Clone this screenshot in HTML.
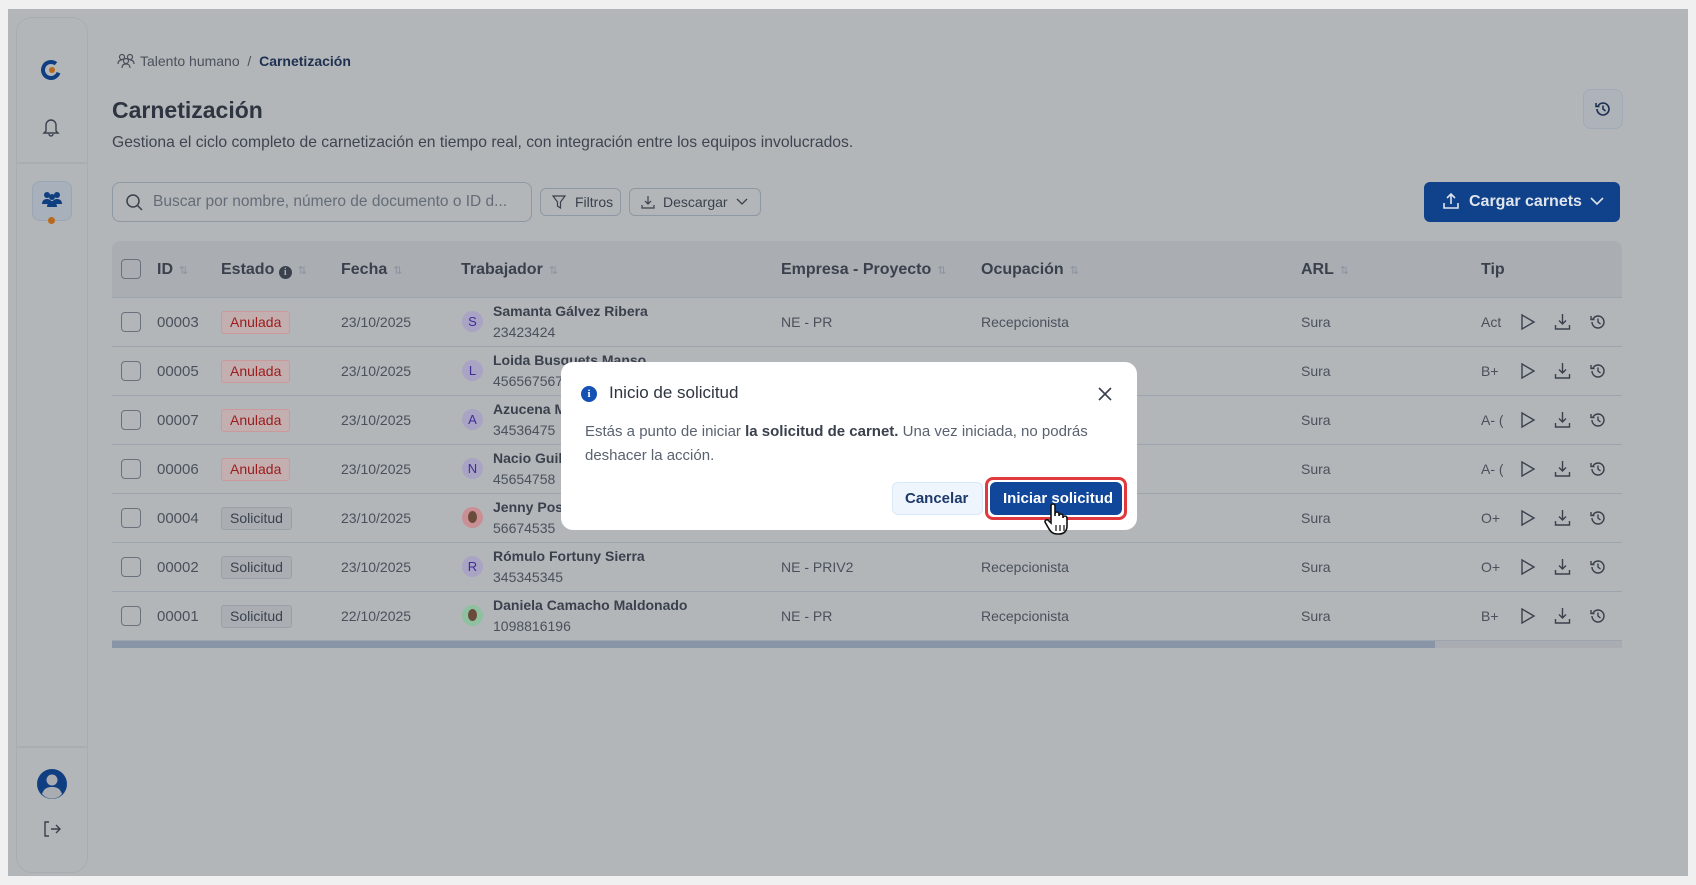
<!DOCTYPE html>
<html><head><meta charset="utf-8"><style>
*{box-sizing:border-box;margin:0;padding:0}
body{width:1696px;height:885px;background:#f0f0f0;font-family:"Liberation Sans",sans-serif;color:#3a414d;position:relative;overflow:hidden}
.abs{position:absolute}
#frame{left:8px;top:9px;width:1680px;height:867px;background:#b3b6b9}
#side{left:16px;top:17px;width:72px;height:856px;border:1px solid #a9adb1;border-radius:16px;background:#b2b6b9}
.t{position:absolute;white-space:nowrap}
.hdr{font-size:16px;font-weight:bold;color:#3a414d}
.sort{color:#8a93a0;font-size:11px;margin-left:6px;font-weight:normal}
.cell{font-size:14px;color:#4a515c}
.cb{position:absolute;width:20px;height:20px;border:1.5px solid #6a727d;border-radius:4px}
.badge{position:absolute;height:23px;border-radius:3px;font-size:14px;line-height:21px;padding:0 8px}
.an{background:#c3aeb0;border:1px solid #c99a9c;color:#9c1c1c}
.so{background:#aaaeb3;border:1px solid #98a0a8;color:#3a414d}
.av{position:absolute;width:21px;height:21px;border-radius:50%;background:#a9a3c4;color:#3d2e9a;font-size:13px;text-align:center;line-height:21px}
.line{position:absolute;left:112px;width:1510px;height:1px;background:#9ca4ae}
.btn{position:absolute;border:1px solid #8e98a4;border-radius:6px;font-size:14px;color:#3a414d}
</style></head><body>
<div id="frame" class="abs"></div>
<div id="side" class="abs"></div>
<div class="abs" style="left:16px;top:162px;width:72px;height:2px;background:#a9adb1"></div>
<div class="abs" style="left:16px;top:746px;width:72px;height:2px;background:#a9adb1"></div>
<svg class="abs" style="left:40px;top:59px" width="22" height="22" viewBox="0 0 22 22"><circle cx="11" cy="11" r="8" fill="none" stroke="#0f3f80" stroke-width="4" stroke-dasharray="40 10" transform="rotate(20 11 11)"/><circle cx="12" cy="11" r="3" fill="#b86a1c"/></svg>
<svg class="abs" style="left:42px;top:117px" width="18" height="20" viewBox="0 0 18 20"><path d="M4 14V8a5 5 0 0110 0v6l2 2H2z M7 17a2 2 0 004 0" fill="none" stroke="#3a414d" stroke-width="1.4"/></svg>
<div class="abs" style="left:32px;top:181px;width:40px;height:40px;border-radius:8px;background:#a7b0bb;border:1px solid #9aa6b3"></div>
<svg class="abs" style="left:41px;top:191px" width="22" height="16" viewBox="0 0 22 16"><circle cx="6" cy="4" r="3" fill="#0f3f80"/><circle cx="16" cy="4" r="3" fill="#0f3f80"/><circle cx="11" cy="6" r="3" fill="#0f3f80"/><path d="M1 13c0-4 3-5 5-5s5 1 5 5M11 13c0-4 3-5 5-5s5 1 5 5M6 16c0-4 3-6 5-6s5 2 5 6" fill="#0f3f80"/></svg>
<div class="abs" style="left:48px;top:217px;width:7px;height:7px;border-radius:50%;background:#b86a1c"></div>
<svg class="abs" style="left:36px;top:768px" width="32" height="32" viewBox="0 0 32 32"><circle cx="16" cy="16" r="15" fill="#0f3f80"/><circle cx="16" cy="12" r="5.5" fill="#a9adb2"/><path d="M6 26c2-6 6-7 10-7s8 1 10 7a13 13 0 01-20 0z" fill="#a9adb2"/></svg>
<svg class="abs" style="left:43px;top:820px" width="18" height="18" viewBox="0 0 18 18"><path d="M6 2H2v14h4M8 9h9M13 5l4 4-4 4" fill="none" stroke="#3a414d" stroke-width="1.4"/></svg>

<svg class="abs" style="left:117px;top:53px" width="18" height="16" viewBox="0 0 18 16"><circle cx="5" cy="4" r="2.5" fill="none" stroke="#4a515c" stroke-width="1.2"/><circle cx="13" cy="4" r="2.5" fill="none" stroke="#4a515c" stroke-width="1.2"/><circle cx="9" cy="8" r="2.5" fill="none" stroke="#4a515c" stroke-width="1.2"/><path d="M1 11c0-3 2-4 4-4M17 11c0-3-2-4-4-4M5 15c0-3 2-4 4-4s4 1 4 4" fill="none" stroke="#4a515c" stroke-width="1.2"/></svg>
<div class="t" style="left:140px;top:53px;font-size:14px;color:#4a515c">Talento humano &nbsp;/ &nbsp;<b style="color:#1e3050">Carnetización</b></div>
<div class="t" style="left:112px;top:97px;font-size:23px;font-weight:bold;color:#2e3540">Carnetización</div>
<div class="t" style="left:112px;top:134px;font-size:15.7px;color:#3e4550">Gestiona el ciclo completo de carnetización en tiempo real, con integración entre los equipos involucrados.</div>
<div class="abs" style="left:1583px;top:89px;width:40px;height:40px;border-radius:8px;border:1px solid #a0aab6;background:#aeb3b9"></div>
<svg class="abs" style="left:1594px;top:100px" width="18" height="18" viewBox="0 0 18 18"><path d="M3 9a6 6 0 106-6 6 6 0 00-5 3M2 3v3.5h3.5M9 5.5V9l2.5 2" fill="none" stroke="#1e3050" stroke-width="1.6"/></svg>

<div class="abs" style="left:112px;top:182px;width:420px;height:40px;border:1px solid #8e98a4;border-radius:8px"></div>
<svg class="abs" style="left:125px;top:193px" width="18" height="18" viewBox="0 0 18 18"><circle cx="8" cy="8" r="6" fill="none" stroke="#3a414d" stroke-width="1.5"/><path d="M12.5 12.5L17 17" stroke="#3a414d" stroke-width="1.5"/></svg>
<div class="t" style="left:153px;top:193px;font-size:15.5px;color:#646c77">Buscar por nombre, número de documento o ID d...</div>
<div class="btn" style="left:540px;top:188px;width:81px;height:28px"><span class="t" style="left:34px;top:5px">Filtros</span></div>
<svg class="abs" style="left:552px;top:195px" width="14" height="14" viewBox="0 0 14 14"><path d="M1 1h12L8.5 7v6L5.5 11V7z" fill="none" stroke="#3a414d" stroke-width="1.2"/></svg>
<div class="btn" style="left:629px;top:188px;width:132px;height:28px"><span class="t" style="left:33px;top:5px">Descargar</span></div>
<svg class="abs" style="left:641px;top:195px" width="14" height="14" viewBox="0 0 14 14"><path d="M7 1v8M4 6l3 3 3-3M1 10v3h12v-3" fill="none" stroke="#3a414d" stroke-width="1.2"/></svg>
<svg class="abs" style="left:736px;top:198px" width="12" height="8" viewBox="0 0 12 8"><path d="M1 1l5 5 5-5" fill="none" stroke="#3a414d" stroke-width="1.3"/></svg>
<div class="abs" style="left:1424px;top:182px;width:196px;height:40px;border-radius:6px;background:#0f428a"></div>
<svg class="abs" style="left:1442px;top:192px" width="18" height="18" viewBox="0 0 18 18"><path d="M9 12V2M5 6l4-4 4 4M2 11v5h14v-5" fill="none" stroke="#dfe4ec" stroke-width="1.6"/></svg>
<div class="t" style="left:1469px;top:193px;font-size:16px;font-weight:bold;color:#dfe4ec">Cargar carnets</div>
<svg class="abs" style="left:1590px;top:197px" width="14" height="9" viewBox="0 0 14 9"><path d="M1 1l6 6 6-6" fill="none" stroke="#dfe4ec" stroke-width="1.6"/></svg>

<div class="abs" style="left:112px;top:241px;width:1510px;height:56px;background:#aaaeb2;border-radius:8px 8px 0 0"></div>
<div class="line" style="top:297px"></div>
<div class="cb" style="left:121px;top:259px"></div>
<div class="t hdr" style="left:157px;top:261px">ID<span class="sort">⇅</span></div>
<div class="t hdr" style="left:221px;top:261px">Estado <span style="display:inline-block;width:13px;height:13px;border-radius:50%;background:#3a414d;vertical-align:-1px;color:#aaaeb2;font-size:10px;text-align:center;line-height:13px;font-family:'Liberation Serif',serif">i</span><span class="sort">⇅</span></div>
<div class="t hdr" style="left:341px;top:261px">Fecha<span class="sort">⇅</span></div>
<div class="t hdr" style="left:461px;top:261px">Trabajador<span class="sort">⇅</span></div>
<div class="t hdr" style="left:781px;top:261px">Empresa - Proyecto<span class="sort">⇅</span></div>
<div class="t hdr" style="left:981px;top:261px">Ocupación<span class="sort">⇅</span></div>
<div class="t hdr" style="left:1301px;top:261px">ARL<span class="sort">⇅</span></div>
<div class="t hdr" style="left:1481px;top:261px">Tip</div>

<div id="rows"></div>
<div class="abs" style="left:112px;top:641px;width:1510px;height:7px;background:#a9adb2"></div>
<div class="abs" style="left:112px;top:641px;width:1323px;height:7px;background:#8895a6"></div>

<div class="abs" style="left:561px;top:362px;width:576px;height:168px;background:#fff;border-radius:12px"></div>
<div class="abs" style="left:581px;top:386px;width:16px;height:16px;border-radius:50%;background:#1351b4;color:#fff;font-size:11px;font-weight:bold;text-align:center;line-height:16px;font-family:'Liberation Serif',serif">i</div>
<div class="t" style="left:609px;top:383px;font-size:17px;color:#2e3540">Inicio de solicitud</div>
<svg class="abs" style="left:1098px;top:387px" width="14" height="14" viewBox="0 0 14 14"><path d="M1 1l12 12M13 1L1 13" stroke="#3a414d" stroke-width="1.6"/></svg>
<div class="t" style="left:585px;top:420px;font-size:15px;color:#5a6270;line-height:24px">Estás a punto de iniciar <b style="color:#3a414d">la solicitud de carnet.</b> Una vez iniciada, no podrás<br>deshacer la acción.</div>
<div class="abs" style="left:892px;top:482px;width:91px;height:33px;border-radius:6px;background:#eef5fd;border:1px solid #d8e8f8"></div>
<div class="t" style="left:905px;top:490px;font-size:15px;color:#1e3a6a;font-weight:bold">Cancelar</div>
<div class="abs" style="left:985px;top:477px;width:142px;height:43px;border-radius:8px;border:3px solid #e03a3e"></div>
<div class="abs" style="left:990px;top:482px;width:132px;height:33px;border-radius:6px;background:#11479a"></div>
<div class="t" style="left:1003px;top:490px;font-size:15px;color:#fff;font-weight:bold">Iniciar solicitud</div>
<svg class="abs" style="left:1043px;top:503px" width="28" height="34" viewBox="0 0 28 34"><path d="M8 3a2 2 0 014 0v10l0-2a2 2 0 014 0v2a2 2 0 014 0v2a2 2 0 014 0v8c0 5-3 8-8 8h-2c-4 0-6-2-8-5l-4-7a2 2 0 013-2l3 3z" fill="#fff" stroke="#111" stroke-width="1.6"/><path d="M13 22v6M17 22v6M21 22v6" stroke="#111" stroke-width="1.2"/></svg>

<script>
const rows=[
["00003","Anulada","23/10/2025","S","Samanta Gálvez Ribera","23423424","NE - PR","Recepcionista","Act"],
["00005","Anulada","23/10/2025","L","Loida Busquets Manso","456567567","","","B+ ("],
["00007","Anulada","23/10/2025","A","Azucena M","34536475","","","A- ("],
["00006","Anulada","23/10/2025","N","Nacio Guill","45654758","","","A- ("],
["00004","Solicitud","23/10/2025","p","Jenny Posc","56674535","","","O+"],
["00002","Solicitud","23/10/2025","R","Rómulo Fortuny Sierra","345345345","NE - PRIV2","Recepcionista","O+"],
["00001","Solicitud","22/10/2025","q","Daniela Camacho Maldonado","1098816196","NE - PR","Recepcionista","B+ ("]];
let h="";
rows.forEach((r,i)=>{const c=322+i*49;
h+=`<div class="cb" style="left:121px;top:${c-10}px"></div>
<div class="t cell" style="left:157px;top:${c-8}px;font-size:15px">${r[0]}</div>
<div class="badge ${r[1]=='Anulada'?'an':'so'}" style="left:221px;top:${c-11}px">${r[1]}</div>
<div class="t cell" style="left:341px;top:${c-8}px">${r[2]}</div>`;
if(r[3]=='p'||r[3]=='q') h+=`<div class="av" style="left:462px;top:${c-11}px;background:${r[3]=='p'?'#c98f95':'#8fc0a0'}"><div style="width:9px;height:12px;border-radius:50%;background:#6a4a3a;margin:4px auto"></div></div>`;
else h+=`<div class="av" style="left:462px;top:${c-11}px">${r[3]}</div>`;
h+=`<div class="t" style="left:493px;top:${c-19}px;font-size:14px;font-weight:bold;color:#3a414d">${r[4]}</div>
<div class="t cell" style="left:493px;top:${c+2}px">${r[5]}</div>
<div class="t cell" style="left:781px;top:${c-8}px">${r[6]}</div>
<div class="t cell" style="left:981px;top:${c-8}px">${r[7]}</div>
<div class="t cell" style="left:1301px;top:${c-8}px">Sura</div>
<div class="t cell" style="left:1481px;top:${c-8}px;width:22px;overflow:hidden">${r[8]}</div>
<svg class="abs" style="left:1520px;top:${c-9}px" width="16" height="18" viewBox="0 0 16 18"><path d="M2 2l12 7-12 7z" fill="none" stroke="#3a414d" stroke-width="1.4"/></svg>
<svg class="abs" style="left:1554px;top:${c-9}px" width="17" height="17" viewBox="0 0 17 17"><path d="M8.5 1v10M5 7.5l3.5 3.5 3.5-3.5M1.5 12v4h14v-4" fill="none" stroke="#3a414d" stroke-width="1.4"/></svg>
<svg class="abs" style="left:1589px;top:${c-9}px" width="18" height="18" viewBox="0 0 18 18"><path d="M3 9a6 6 0 106-6 6 6 0 00-5 3M2 3v3.5h3.5M9 5.5V9l2.5 2" fill="none" stroke="#3a414d" stroke-width="1.4"/></svg>
<div class="line" style="top:${c+24}px"></div>`;});
document.getElementById("rows").outerHTML=h;
</script>
</body></html>
